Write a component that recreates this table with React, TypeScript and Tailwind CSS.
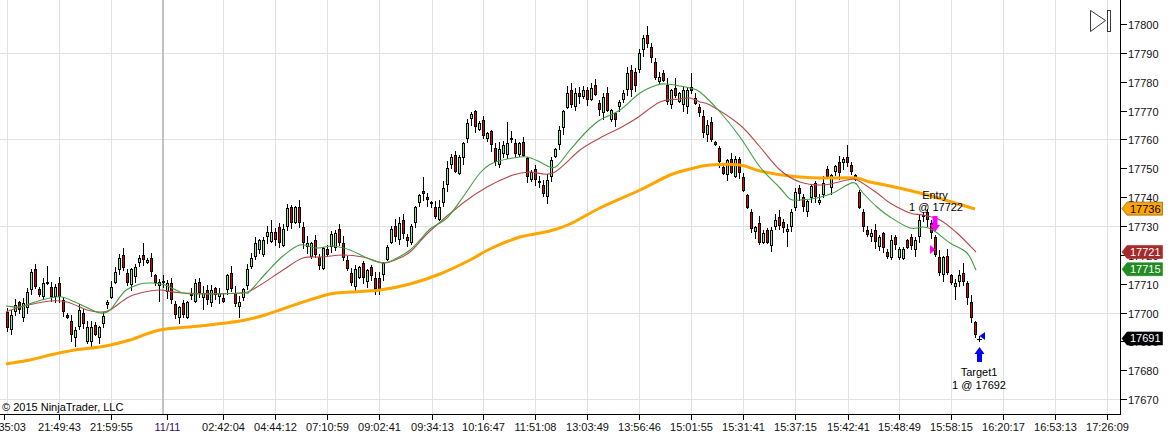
type Pt = [number, number];

// body top, body bottom, up(1)/down(0), optional wick top, optional wick low (page px)
const BARS: number[][] = [
  [312, 328, 0], [315, 330, 1], [305, 312, 1], [302, 310, 0], [303, 318, 1], [292, 308, 1], [272, 290, 1], [269, 287, 0],
  [289, 295, 0], [283, 297, 1, 278], [282, 284, 0, 266], [287, 297, 0], [287, 297, 1], [283, 297, 0], [300, 312, 0], [315, 318, 0],
  [321, 335, 0], [330, 338, 1, 0, 347], [310, 327, 1], [313, 324, 0], [327, 342, 1], [327, 342, 1], [325, 335, 0], [327, 338, 1],
  [316, 324, 1], [302, 305, 1], [287, 298, 1], [272, 283, 1], [258, 270, 1], [255, 268, 0], [273, 283, 0], [269, 285, 1],
  [267, 277, 1], [258, 263, 1], [255, 260, 0, 243], [260, 263, 1], [258, 272, 0], [275, 283, 0], [282, 286, 1, 0, 302], [281, 283, 0],
  [283, 292, 1], [283, 300, 0], [304, 315, 0], [307, 318, 1, 0, 324], [303, 315, 0], [302, 318, 1], [294, 296, 1], [283, 302, 1],
  [282, 293, 0], [293, 298, 1, 0, 310], [290, 300, 0], [290, 303, 1], [288, 295, 0], [293, 297, 1], [298, 302, 0], [275, 290, 1],
  [273, 289, 0], [293, 304, 0], [302, 307, 1, 0, 318], [289, 298, 1], [269, 286, 1], [258, 267, 1], [243, 257, 1], [240, 250, 1],
  [240, 255, 1], [232, 237, 1], [232, 242, 1, 220], [232, 240, 0], [227, 243, 0], [229, 246, 1], [208, 227, 1], [207, 223, 0],
  [207, 223, 1], [207, 223, 0], [227, 243, 0], [243, 247, 1], [243, 257, 1], [240, 255, 0], [257, 266, 0], [248, 269, 1],
  [249, 255, 0], [234, 247, 1], [233, 248, 1], [229, 243, 0], [243, 258, 0], [260, 269, 0], [273, 283, 0], [269, 287, 1],
  [267, 278, 1], [263, 278, 0], [270, 282, 1], [267, 276, 0], [278, 289, 0], [278, 289, 0, 0, 295], [263, 275, 1], [247, 260, 1],
  [229, 243, 1], [226, 237, 0], [223, 240, 1], [220, 234, 0], [237, 241, 0], [226, 243, 1], [207, 223, 1], [195, 203, 1],
  [191, 194, 0, 177], [197, 200, 0], [202, 204, 1], [207, 217, 0], [207, 220, 1], [188, 203, 1], [168, 185, 1], [157, 165, 1],
  [155, 172, 0], [157, 174, 1], [143, 158, 1], [123, 139, 1], [114, 119, 1], [111, 127, 0], [123, 130, 1], [120, 136, 0],
  [133, 139, 1], [131, 145, 0], [148, 162, 0], [149, 165, 1], [145, 154, 1], [143, 155, 1, 122], [138, 140, 1], [143, 154, 0],
  [143, 155, 1], [142, 156, 0], [158, 177, 0], [172, 180, 1], [169, 180, 0], [181, 183, 1], [185, 194, 0], [180, 197, 1],
  [160, 177, 1], [149, 157, 1], [130, 145, 1], [111, 128, 1], [93, 108, 1], [90, 105, 0], [93, 107, 1], [93, 97, 0],
  [90, 97, 1], [90, 100, 0], [88, 100, 1], [85, 95, 0], [103, 110, 0], [97, 113, 1], [93, 111, 0], [110, 120, 1],
  [113, 120, 0], [102, 107, 1], [93, 100, 1], [73, 90, 1], [70, 90, 0], [72, 86, 0], [53, 70, 1], [38, 50, 1],
  [35, 44, 0, 26], [47, 58, 0], [62, 78, 0], [77, 82, 1], [73, 81, 0], [85, 102, 0], [90, 105, 1], [88, 96, 0, 78],
  [93, 102, 1], [90, 105, 1], [90, 107, 1], [87, 91, 0, 73], [98, 104, 0], [107, 113, 0], [116, 133, 0], [125, 135, 1],
  [122, 140, 0], [142, 145, 0], [148, 162, 0], [167, 174, 0], [160, 175, 1], [159, 173, 0], [159, 177, 1], [159, 173, 0],
  [177, 191, 0], [195, 208, 0], [212, 229, 0], [227, 232, 1], [223, 243, 0], [233, 243, 1], [230, 243, 0], [230, 246, 1],
  [220, 227, 1], [217, 226, 0], [222, 228, 0], [229, 232, 1, 0, 247], [212, 227, 1], [192, 208, 1], [188, 194, 0], [197, 207, 0],
  [201, 212, 1], [186, 198, 1], [183, 197, 0], [200, 203, 1], [183, 195, 1], [169, 177, 0], [175, 188, 1], [166, 172, 1],
  [162, 173, 0], [159, 163, 1], [157, 163, 0, 145], [165, 172, 0], [175, 180, 0], [192, 208, 0], [212, 227, 0], [230, 235, 0],
  [233, 237, 1], [230, 242, 0], [237, 247, 1], [233, 248, 0], [252, 257, 0], [240, 258, 1], [237, 245, 0], [249, 258, 1],
  [249, 259, 1], [240, 248, 0], [237, 246, 0], [240, 250, 1], [220, 237, 1], [215, 217, 1], [212, 220, 0], [223, 233, 0],
  [237, 255, 0], [257, 273, 0], [257, 275, 1], [256, 273, 0], [275, 283, 0], [283, 287, 1, 0, 300], [275, 282, 1], [273, 282, 0, 263],
  [283, 298, 0], [302, 318, 0], [322, 335, 0], [339, 339, 1, 336, 342],
];

const ORANGE: Pt[] = [
  [6, 364], [30, 360], [50, 355], [75, 350], [100, 347], [115, 344], [130, 340], [160, 330], [200, 326], [240, 321],
  [265, 315], [300, 303], [330, 294], [350, 292], [380, 290], [410, 284], [440, 274], [470, 260], [490, 249], [520, 237],
  [550, 231], [570, 224], [600, 208], [640, 190], [670, 175], [690, 169], [710, 165], [740, 165], [760, 171], [790, 176],
  [820, 178], [855, 178], [870, 182], [890, 186], [920, 193], [945, 200], [975, 209],
];

const GREEN: Pt[] = [
  [6, 306], [20, 307], [35, 302], [50, 298], [62, 297], [75, 302], [90, 309], [100, 313], [110, 310], [125, 291],
  [140, 284], [150, 283], [165, 285], [183, 293], [200, 294], [243, 293], [250, 291], [267, 272], [283, 256], [300, 245],
  [317, 248], [333, 246], [350, 250], [367, 258], [383, 263], [397, 258], [410, 250], [420, 240], [430, 229], [447, 218],
  [463, 197], [480, 173], [493, 163], [513, 158], [527, 157], [540, 162], [550, 167], [557, 166], [570, 150], [587, 131],
  [600, 120], [620, 110], [640, 93], [657, 85], [667, 84], [680, 86], [690, 88], [700, 92], [720, 112], [740, 137],
  [760, 167], [780, 188], [790, 199], [800, 200], [817, 198], [833, 193], [847, 185], [855, 183], [863, 193], [877, 207],
  [890, 217], [910, 228], [923, 227], [933, 230], [950, 243], [967, 253], [976, 270],
];

const RED: Pt[] = [
  [6, 312], [20, 307], [50, 301], [67, 302], [87, 310], [100, 312], [110, 310], [127, 298], [140, 293], [160, 290],
  [183, 293], [240, 293], [257, 287], [283, 270], [303, 258], [323, 257], [343, 255], [363, 257], [383, 263], [395, 260],
  [410, 252], [430, 231], [463, 203], [487, 187], [513, 175], [530, 172], [553, 173], [580, 150], [600, 138], [620, 128],
  [637, 118], [660, 102], [680, 99], [690, 98], [700, 102], [710, 105], [740, 125], [760, 147], [780, 170], [800, 182],
  [823, 185], [847, 180], [857, 180], [877, 193], [890, 203], [910, 213], [923, 215], [940, 220], [957, 233], [976, 252],
];

const TIMES: [number, string][] = [
  [4, '21:35:03'], [59, '21:49:43'], [111, '21:59:55'], [167, '11/11'], [223, '02:42:04'], [275, '04:44:12'],
  [327, '07:10:59'], [379, '09:02:41'], [432, '09:34:13'], [483, '10:16:47'], [535, '11:51:08'], [587, '13:03:49'],
  [639, '13:56:46'], [691, '15:01:55'], [743, '15:31:41'], [795, '15:37:15'], [848, '15:42:41'], [899, '15:48:49'],
  [951, '15:58:15'], [1003, '16:20:17'], [1055, '16:53:13'], [1107, '17:26:09'],
];

const priceY = (p: number) => 24 + (17800 - p) * 2.885;

function rng(seed: number) {
  let a = seed;
  return () => {
    a = (a + 0x6d2b79f5) | 0;
    let t = Math.imul(a ^ (a >>> 15), 1 | a);
    t = (t + Math.imul(t ^ (t >>> 7), 61 | t)) ^ t;
    return ((t ^ (t >>> 14)) >>> 0) / 4294967296;
  };
}

function curve(pts: Pt[]) {
  let d = `M${pts[0][0]},${pts[0][1]}`;
  for (let i = 0; i < pts.length - 1; i++) {
    const p0 = pts[i - 1] || pts[i];
    const p1 = pts[i];
    const p2 = pts[i + 1];
    const p3 = pts[i + 2] || p2;
    const c1x = p1[0] + (p2[0] - p0[0]) / 6;
    const c1y = p1[1] + (p2[1] - p0[1]) / 6;
    const c2x = p2[0] - (p3[0] - p1[0]) / 6;
    const c2y = p2[1] - (p3[1] - p1[1]) / 6;
    d += ` C${c1x.toFixed(1)},${c1y.toFixed(1)} ${c2x.toFixed(1)},${c2y.toFixed(1)} ${p2[0]},${p2[1]}`;
  }
  return d;
}

function Candles() {
  const rand = rng(11);
  return (
    <g shapeRendering="crispEdges">
      {BARS.map((b, i) => {
        const x = 7 + i * 4;
        const [t, bt, up, hi, lo] = b;
        const r1 = rand();
        const r2 = rand();
        const top = hi || t - 1 - Math.floor(r1 * 7);
        const bot = lo || bt + 1 + Math.floor(r2 * 7);
        const h = bt - t;
        return (
          <g key={i}>
            <rect x={x} y={top} width={1} height={bot - top} fill="#000" />
            <rect x={x - 1} y={t} width={3} height={Math.max(1, h)} fill="#000" />
            {h >= 3 && <rect x={x} y={t + 1} width={1} height={h - 2} fill={up ? '#90ee90' : '#e00000'} />}
          </g>
        );
      })}
    </g>
  );
}

function Plot() {
  const hLines = [17790, 17760, 17730, 17700, 17670];
  const vLines = [7, ...TIMES.slice(1).map((t) => t[0]).filter((x) => x !== 167)];
  return (
    <svg width={1120} height={414} className="block">
      <g stroke="#e2e2e2" strokeWidth={1} shapeRendering="crispEdges">
        {hLines.map((p) => (
          <line key={p} x1={0} x2={1120} y1={Math.round(priceY(p)) + 0.5} y2={Math.round(priceY(p)) + 0.5} />
        ))}
        {vLines.map((x) => (
          <line key={x} x1={x + 0.5} x2={x + 0.5} y1={0} y2={414} />
        ))}
      </g>
      <line x1={163} x2={163} y1={0} y2={414} stroke="#c2c2c2" strokeWidth={2} shapeRendering="crispEdges" />
      <Candles />
      <path d={curve(ORANGE)} fill="none" stroke="#ffa500" strokeWidth={3} strokeLinejoin="round" />
      <path d={curve(RED)} fill="none" stroke="#b54a4a" strokeWidth={1.1} />
      <path d={curve(GREEN)} fill="none" stroke="#3f9e3f" strokeWidth={1.1} />

      {/* execution markers */}
      <polygon points="932.5,216 937.5,216 937.5,225 940,225 935,232 930,225 932.5,225" fill="#ff00ff" />
      <polygon points="930,245 935.5,249.5 930,254" fill="#ff00ff" />
      <polygon points="985,332 979.5,336 985,340" fill="#0000ff" />
      <polygon points="979.5,347 984.5,354 982,354 982,362 977,362 977,354 974.5,354" fill="#0000ff" />
      <line x1={977} x2={982} y1={339.5} y2={339.5} stroke="#000" shapeRendering="crispEdges" />

      <g fontSize={11} fill="#000" textAnchor="middle">
        <text x={935} y={199}>Entry</text>
        <text x={936} y={211}>1 @ 17722</text>
        <text x={979} y={376}>Target1</text>
        <text x={979} y={389}>1 @ 17692</text>
      </g>
    </svg>
  );
}

const FLAGS: [number, string, string, string][] = [
  [17736, '#ffa500', '#000', '#6b4a00'],
  [17721, '#a52a2a', '#fff', '#a52a2a'],
  [17715, '#228b22', '#fff', '#228b22'],
  [17691, '#000', '#fff', '#000'],
];

function PriceAxis() {
  const prices = Array.from({ length: 14 }, (_, i) => 17800 - i * 10);
  return (
    <svg width={49} height={415} className="block">
      {prices.map((p) => {
        const y = Math.round(priceY(p)) + 0.5;
        return (
          <g key={p}>
            <line x1={0} x2={6} y1={y} y2={y} stroke="#000" shapeRendering="crispEdges" />
            <text x={7} y={y + 4} fontSize={11} fill="#111">
              {p}
            </text>
          </g>
        );
      })}
      {FLAGS.map(([p, bg, fg, edge]) => {
        const y = priceY(p);
        return (
          <g key={p}>
            <polygon
              points={`1,${y} 6,${y - 6.5} 41.5,${y - 6.5} 41.5,${y + 6.5} 6,${y + 6.5}`}
              fill={bg}
              stroke={edge}
              strokeWidth={0.6}
            />
            <text x={9} y={y + 4} fontSize={11} fill={fg}>
              {p}
            </text>
          </g>
        );
      })}
    </svg>
  );
}

function TimeAxis() {
  return (
    <svg width={1170} height={26} className="block">
      {TIMES.map(([x, label]) => (
        <g key={label}>
          <line x1={x + 0.5} x2={x + 0.5} y1={0} y2={5} stroke="#000" shapeRendering="crispEdges" />
          <text x={x + 0.5} y={16} fontSize={11} textAnchor="middle" fill={label === '11/11' ? '#3d0b5c' : '#111'}>
            {label}
          </text>
        </g>
      ))}
    </svg>
  );
}

export default function App() {
  return (
    <div className="w-[1170px] h-[441px] overflow-hidden bg-white font-['Liberation_Sans',Arial,sans-serif] text-black">
      <div className="flex h-[415px]">
        <div className="relative h-full w-[1121px] overflow-hidden border-r border-b border-black">
          <Plot />
          <span className="absolute left-[2px] top-[401px] whitespace-nowrap text-[11px] leading-[13px] text-black">
            © 2015 NinjaTrader, LLC
          </span>
          <button type="button" className="absolute left-[1088px] top-[8px] block h-[26px] w-[26px] p-0">
            <svg width={26} height={26} viewBox="0 0 26 26" className="block">
              <polygon points="2.5,2.5 17.5,12.5 2.5,23.5" fill="none" stroke="#3a3a3a" strokeWidth={1} />
              <rect x={19.5} y={2.5} width={3} height={21} fill="none" stroke="#3a3a3a" strokeWidth={1} />
            </svg>
          </button>
        </div>
        <div className="h-full w-[49px]">
          <PriceAxis />
        </div>
      </div>
      <div className="h-[26px] w-[1170px] overflow-hidden">
        <TimeAxis />
      </div>
    </div>
  );
}
